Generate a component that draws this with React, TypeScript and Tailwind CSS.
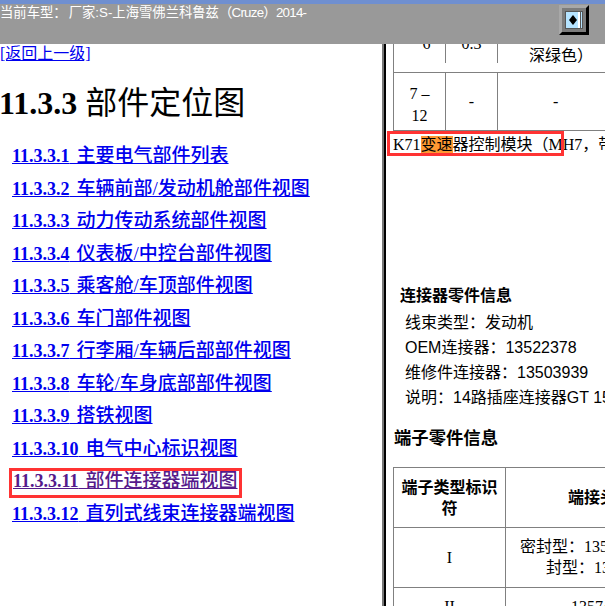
const links = [
  ["11.3.3.1", "主要电气部件列表"],
  ["11.3.3.2", "车辆前部/发动机舱部件视图"],
  ["11.3.3.3", "动力传动系统部件视图"],
  ["11.3.3.4", "仪表板/中控台部件视图"],
  ["11.3.3.5", "乘客舱/车顶部件视图"],
  ["11.3.3.6", "车门部件视图"],
  ["11.3.3.7", "行李厢/车辆后部部件视图"],
  ["11.3.3.8", "车轮/车身底部部件视图"],
  ["11.3.3.9", "搭铁视图"],
  ["11.3.3.10", "电气中心标识视图"],
  ["11.3.3.11", "部件连接器端视图"],
  ["11.3.3.12", "直列式线束连接器端视图"],
];

export default function App() {
  return (
    <div className="w-[605px] h-[606px] overflow-hidden bg-white flex flex-col font-['Liberation_Serif','Noto_Sans_CJK_SC',serif] text-black">
      <div className="h-[4px] shrink-0 bg-[#6f8fd0]" />
      <header className="h-[40px] shrink-0 bg-[#999999] relative">
        <div className="text-[13.33px] leading-[18px] text-white font-['Liberation_Sans','Noto_Sans_CJK_SC',sans-serif] whitespace-nowrap">
          当前车型：<span className="ml-[2px]">厂家:S-上海雪佛兰科鲁兹</span><span className="tracking-[-0.75px]">（Cruze）2014-</span>
        </div>
        <button className="absolute left-[559px] top-[1px] w-[30px] h-[30px] bg-[#7c7c7c] border-[3px] border-t-[#a8a8a8] border-l-[#a8a8a8] border-r-black border-b-black flex items-center justify-center">
          <span className="w-[18px] h-[18px] bg-[#b5e3ff] border border-[#555] flex items-center justify-end pr-[1px]">
            <svg width="8" height="10" viewBox="0 0 8 10"><path d="M4 0L8 5L4 10L0 5Z" fill="#000" /></svg>
            <span className="w-[2px] h-[16px] bg-white ml-[1px]" />
            <span className="w-[1px] h-[16px] bg-[#555]" />
          </span>
        </button>
      </header>
      <div className="flex-1 flex min-h-0">
        <main className="w-[382px] shrink-0 overflow-hidden">
          <a href="#" className="block text-[16px] leading-[20px] text-[#0000ee] underline">[返回上一级]</a>
          <h1 className="mt-[21px] -ml-[1px] text-[32px] leading-[37px] font-bold whitespace-nowrap">
            11.3.3 <span className="font-normal">部件定位图</span>
          </h1>
          <ul className="mt-[18px] pl-[12px] flex flex-col">
            {links.map(([n, t]) => {
              const active = n === "11.3.3.11";
              return (
                <li key={n} className="h-[32.55px] leading-[32.55px] whitespace-nowrap">
                  <a
                    href="#"
                    className={
                      active
                        ? "text-[18px] font-bold underline text-[#551a8b] outline-[3px] outline-[#ff3333] px-[1px] pb-[4px]"
                        : "text-[18px] font-bold underline text-[#0000ee]"
                    }
                  >
                    {n}&nbsp; <span className="text-[19px] font-medium -ml-[2px]">{t}</span>
                  </a>
                </li>
              );
            })}
          </ul>
        </main>
        <div className="w-[4px] shrink-0 bg-black border-l-2 border-[#777]" />
        <section className="flex-1 min-w-0 overflow-hidden text-[16px]">
          <div className="ml-[7px] w-[400px] border-l border-[#808080] h-[87px] flex flex-col">
            <div className="h-[29px] grid grid-cols-[52px_52px_1fr] border-b border-[#808080] items-start text-center overflow-hidden">
              <div className="border-r border-[#808080] h-full leading-[18px] -mt-[9px] pl-[14px]">6</div>
              <div className="border-r border-[#808080] h-full leading-[18px] -mt-[9px]">0.3</div>
              <div className="text-left pl-[31px] leading-[24px]">深绿色）</div>
            </div>
            <div className="h-[58px] grid grid-cols-[52px_52px_1fr] text-center items-center border-b border-[#808080]">
              <div className="border-r border-[#808080] h-full flex items-center justify-center leading-[22px] pt-[7px]">7 –<br />12</div>
              <div className="border-r border-[#808080] h-full flex items-center justify-center">-</div>
              <div className="text-left pl-[55px]">-</div>
            </div>
          </div>
          <div className="ml-[1px] h-[26px] leading-[27px] whitespace-nowrap relative">
            <span className="absolute left-0 top-0 w-[177px] h-[25px] border-[3px] border-[#ff3333] pointer-events-none" />
            <span className="ml-[6px]">K71<span className="bg-[#ff9933]">变速</span>器控制模块（MH7，带</span>
          </div>
          <div className="h-[125px]" />
          <div className="pl-[14px] font-['Liberation_Sans','Noto_Sans_CJK_SC',sans-serif]">
            <h3 className="font-bold text-[16px] leading-[28px] font-['Liberation_Serif','Noto_Sans_CJK_SC',serif]">连接器零件信息</h3>
            <div className="pl-[5px] text-[16px] leading-[25px] whitespace-nowrap">
              <div>线束类型：发动机</div>
              <div>OEM连接器：13522378</div>
              <div>维修件连接器：13503939</div>
              <div>说明：14路插座连接器GT 150</div>
            </div>
          </div>
          <h3 className="mt-[16px] ml-[8px] font-bold text-[17.33px] leading-[25px]">端子零件信息</h3>
          <div className="ml-[7px] mt-[16px] w-[400px] border-t border-l border-[#808080] text-center">
            <div className="h-[60px] grid grid-cols-[112px_1fr] border-b border-[#808080] font-bold">
              <div className="border-r border-[#808080] flex items-center justify-center leading-[21px] px-[6px]">端子类型标识符</div>
              <div className="flex items-center pl-[62px]">端接头</div>
            </div>
            <div className="h-[60px] grid grid-cols-[112px_1fr] border-b border-[#808080]">
              <div className="border-r border-[#808080] flex items-center justify-center">I</div>
              <div className="text-left leading-[21px] pt-[8px] pl-[14px] whitespace-nowrap">
                <div>密封型：13500000</div>
                <div className="pl-[26px]">封型：13500000</div>
              </div>
            </div>
            <div className="h-[20px] grid grid-cols-[112px_1fr]">
              <div className="border-r border-[#808080] leading-[20px] pt-[9px]">II</div>
              <div className="text-left pl-[65px] leading-[20px] pt-[9px]">13574</div>
            </div>
          </div>
        </section>
      </div>
    </div>
  );
}
